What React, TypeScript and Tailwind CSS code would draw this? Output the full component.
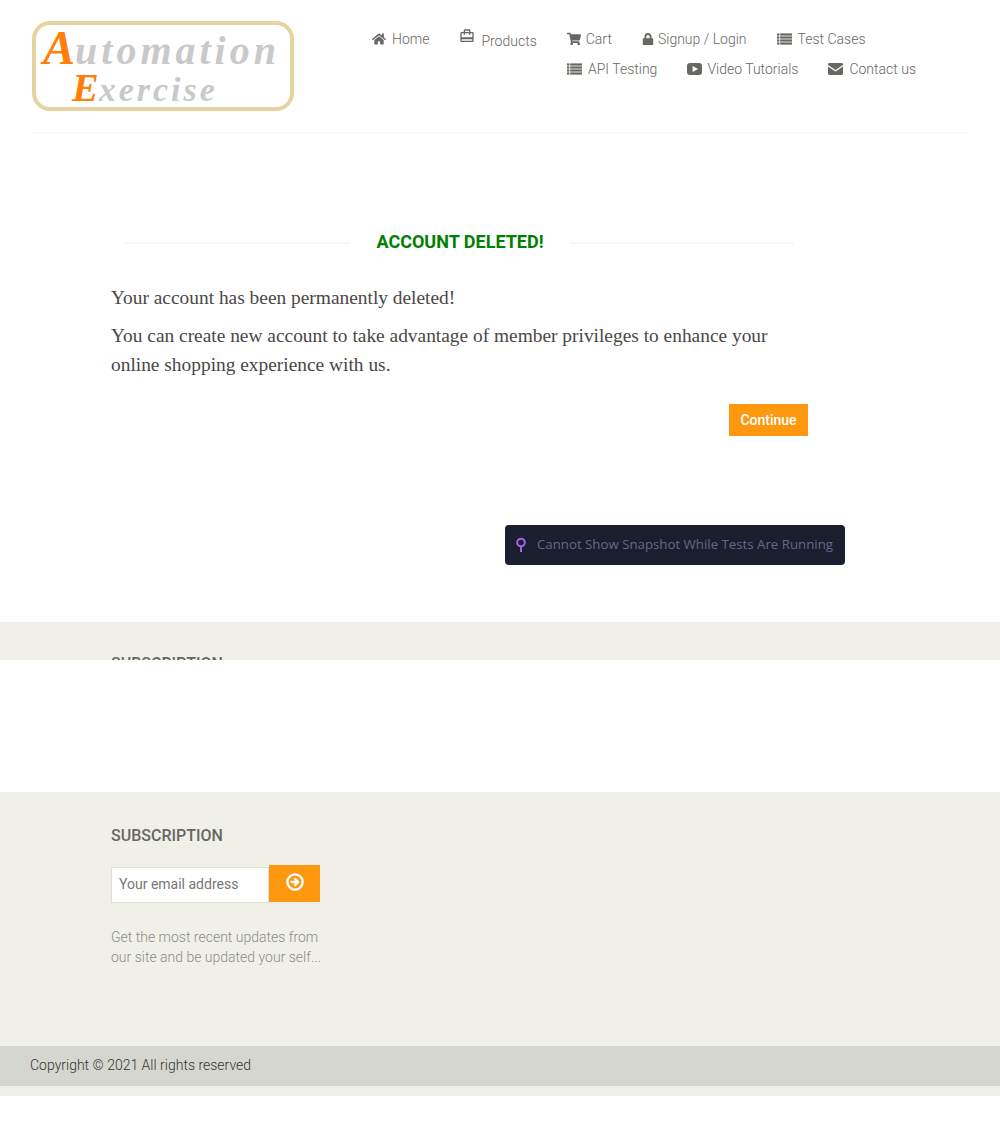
import { FaHome, FaShoppingCart, FaLock } from "react-icons/fa";
import { MdCardTravel } from "react-icons/md";

const navText = "text-[14px] leading-[20px] font-light text-[#696763]";

function ListIcon() {
  return (
    <svg width="15" height="12" viewBox="0 0 15 12" fill="#696763">
      {[0, 3, 6, 9].map((y) => (
        <g key={y}>
          <rect x="0" y={y + 0.4} width="2.4" height="2.2" />
          <rect x="3.2" y={y + 0.4} width="11.8" height="2.2" />
        </g>
      ))}
    </svg>
  );
}

function VideoIcon() {
  return (
    <svg width="15" height="12" viewBox="0 0 15 12">
      <rect width="15" height="12" rx="3" fill="#696763" />
      <path d="M5.6 3 11 6l-5.4 3z" fill="#fff" />
    </svg>
  );
}

function MailIcon() {
  return (
    <svg width="15" height="12" viewBox="0 0 15 12" fill="#696763">
      <path d="M0 1.4C0 .6.6 0 1.4 0h12.2c.8 0 1.4.6 1.4 1.4v.5L7.5 7 0 1.9z" />
      <path d="M0 3.4 7.5 8.5 15 3.4v7.2c0 .8-.6 1.4-1.4 1.4H1.4C.6 12 0 11.4 0 10.6z" />
    </svg>
  );
}

function NavItem({ icon, label, offset }: { icon: React.ReactNode; label: string; offset: string }) {
  return (
    <a className={`flex items-center ${navText}`}>
      <span className={`flex ${offset}`}>{icon}</span>
      <span>{label}</span>
    </a>
  );
}

function Logo() {
  return (
    <div className="h-[90px] w-[262px] rounded-[18px] border-[4px] border-[#e7d3a2] bg-white pl-[7px] font-['Liberation_Serif',serif] font-bold text-[#c9c9c9] italic">
      <div className="flex h-[45px] items-baseline pt-[1px] text-[40px] leading-[44px] tracking-[4px] whitespace-nowrap">
        <span className="text-[48px] tracking-normal text-[#ff7f0a]">A</span>
        <span>utomation</span>
      </div>
      <div className="ml-[29px] flex h-[36px] items-baseline text-[34px] leading-[36px] tracking-[3px] whitespace-nowrap">
        <span className="text-[40px] tracking-normal text-[#ff7f0a]">E</span>
        <span>xercise</span>
      </div>
    </div>
  );
}

function Subscription() {
  return <h2 className="text-[16px] leading-[20px] font-medium text-[#696763]">SUBSCRIPTION</h2>;
}

export default function App() {
  return (
    <div className="relative min-h-[1126px] bg-white font-['Roboto',sans-serif]">
      {/* Header */}
      <header className="mx-[30px] flex h-[133px] border-b border-[#f7f7f5] pt-[21px] pl-[2px]">
        <Logo />
        <nav className="ml-[78px] flex flex-col pt-[8px]">
          <div className="flex h-[20px] items-start gap-[30px]">
            <NavItem icon={<FaHome size={14} />} label="Home" offset="w-[20px]" />
            <a className={`flex items-start ${navText}`}>
              <span className="mt-[-1px] flex w-[22px]"><MdCardTravel size={16} /></span>
              <span className="mt-[2px]">Products</span>
            </a>
            <NavItem icon={<FaShoppingCart size={14} />} label="Cart" offset="w-[19px]" />
            <NavItem icon={<FaLock size={12} />} label="Signup / Login" offset="w-[16px]" />
            <NavItem icon={<ListIcon />} label="Test Cases" offset="w-[21px]" />
          </div>
          <div className="mt-[10px] ml-[195px] flex h-[20px] items-start gap-[30px]">
            <NavItem icon={<ListIcon />} label="API Testing" offset="w-[21px]" />
            <NavItem icon={<VideoIcon />} label="Video Tutorials" offset="w-[20px]" />
            <NavItem icon={<MailIcon />} label="Contact us" offset="w-[21px]" />
          </div>
        </nav>
      </header>

      {/* Account deleted */}
      <main className="h-[489px] pt-[99px] pl-[111px]">
        <div className="w-[697px]">
          <div className="flex h-[20px] items-center pl-[14px]">
            <div className="mt-[2px] h-[2px] w-[225px] bg-[#f7f7f5]" />
            <h2 className="w-[220px] text-center text-[18px] leading-[20px] font-bold text-[#008000]">ACCOUNT DELETED!</h2>
            <div className="mt-[2px] h-[2px] w-[224px] bg-[#f7f7f5]" />
          </div>
          <div className="mt-[31px] font-['Liberation_Serif',serif] text-[19.4px] leading-[29px] text-[#4a4846]">
            <p>Your account has been permanently deleted!</p>
            <p className="mt-[9px]">You can create new account to take advantage of member privileges to enhance your online shopping experience with us.</p>
          </div>
          <div className="mt-[25px] flex justify-end">
            <button className="h-[32px] w-[79px] bg-[#fe980f] text-[14px] font-medium text-white">Continue</button>
          </div>
        </div>
      </main>

      {/* Overlay from the test runner */}
      <div className="absolute top-[525px] left-[505px] flex h-[40px] w-[340px] items-center gap-[10px] rounded-[4px] bg-[#1b1e2e] pl-[10px] font-['Open_Sans',sans-serif] text-[13.25px] text-[#66678a]">
        <svg width="12" height="16" viewBox="0 0 12 16" fill="none">
          <circle cx="6" cy="5.5" r="3.8" stroke="#a066e8" strokeWidth="2" />
          <path d="M6 9v6" stroke="#a066e8" strokeWidth="2" />
        </svg>
        <span className="whitespace-nowrap">Cannot Show Snapshot While Tests Are Running</span>
      </div>

      {/* Footer, cut off by the snapshot */}
      <div className="h-[38px] overflow-hidden bg-[#f0f0e9] pt-[32px] pl-[111px]">
        <Subscription />
      </div>
      <div className="h-[132px]" />

      <footer className="h-[304px] bg-[#f0f0e9]">
        <div className="h-[254px] pt-[34px] pl-[111px]">
          <Subscription />
          <form className="mt-[19px] flex h-[38px] w-[209px] items-start">
            <input
              placeholder="Your email address"
              className="mt-[2px] h-[36px] w-[158px] border border-[#dedede] bg-white pb-[2px] pl-[7px] text-[14px] text-[#696763] placeholder:text-[#777774]"
            />
            <button type="button" className="flex h-[37px] w-[51px] items-center justify-center bg-[#fe980f] pb-[3px]">
              <svg width="18" height="18" viewBox="0 0 18 18" fill="none" stroke="#fff">
                <circle cx="9" cy="9" r="7.6" strokeWidth="2.4" />
                <path d="M4.6 9h7M8.4 5.4 12 9l-3.6 3.6" strokeWidth="2.4" />
              </svg>
            </button>
          </form>
          <p className="mt-[24px] w-[215px] text-[14px] leading-[20px] font-light text-[#8c8c88]">
            Get the most recent updates from our site and be updated your self...
          </p>
        </div>
        <div className="flex h-[40px] items-center bg-[#d6d6d0] pb-[2px] pl-[30px] text-[14px] font-light text-[#363432]">
          Copyright © 2021 All rights reserved
        </div>
      </footer>
    </div>
  );
}
